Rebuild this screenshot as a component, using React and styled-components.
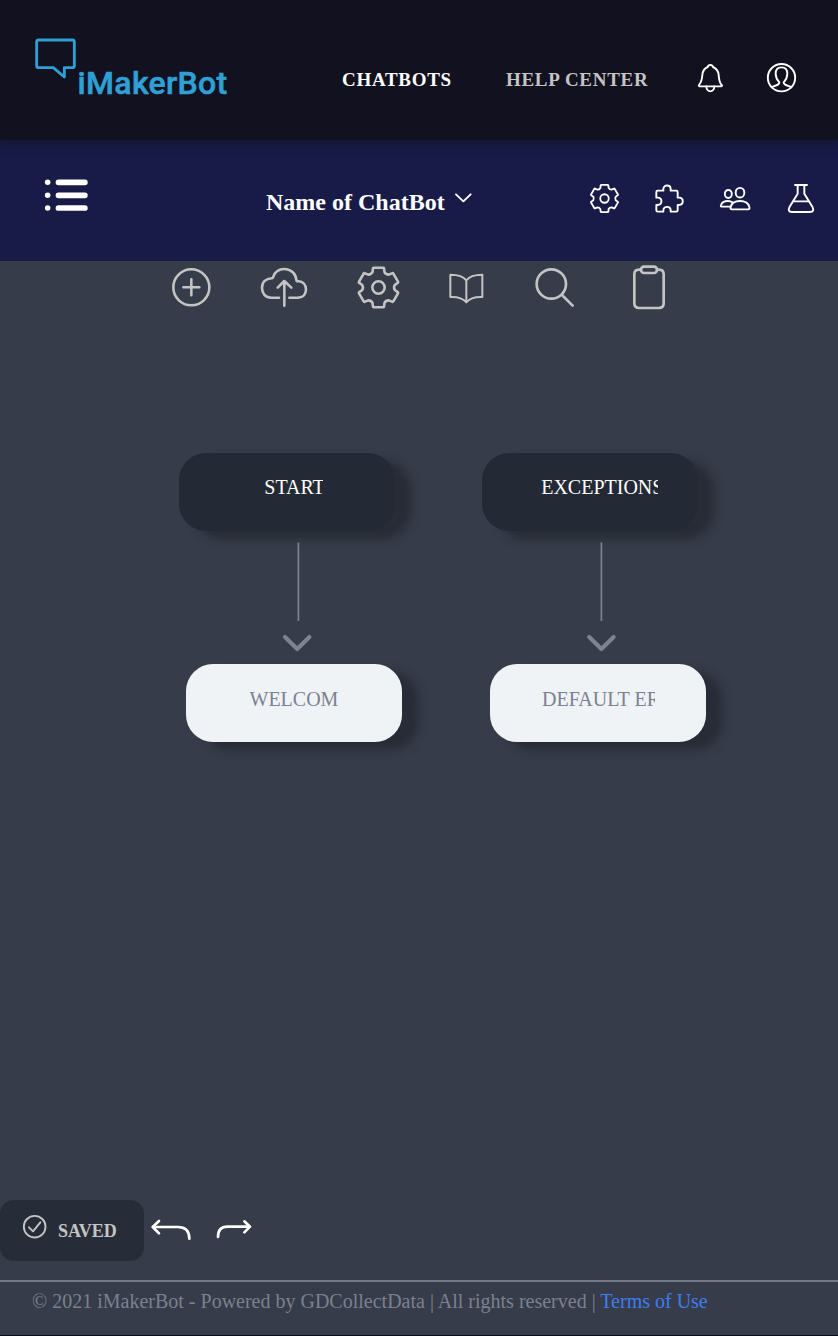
import React from "react";
import styled, { createGlobalStyle } from "styled-components";

const GlobalStyle = createGlobalStyle`
  * { box-sizing: border-box; }
  body {
    margin: 0;
    background: #12111f;
    font-family: "Liberation Serif", "Times New Roman", serif;
    font-size: 20px;
  }
`;

const Page = styled.div`
  display: flex;
  flex-direction: column;
  width: 838px;
  height: 1336px;
  overflow: hidden;
  border-bottom: 1px solid #0d0d18;
`;

const Header = styled.header`
  position: relative;
  display: flex;
  align-items: flex-start;
  height: 140px;
  flex: none;
  padding: 37px 0 0 34px;
  background: #12111f;
  box-shadow: 0 2px 10px rgba(15, 17, 30, 0.8);
`;

const Logo = styled.a`
  display: flex;
  align-items: flex-start;
  width: 308px;
  color: #2f9fd4;
`;

const LogoText = styled.span`
  margin: 27px 0 0 0.6px;
  font: 500 32px/38px Roboto, sans-serif;
  letter-spacing: 0.3px;
  -webkit-text-stroke: 0.6px #2f9fd4;
`;

const HeaderLink = styled.a`
  margin: 31px ${(p) => p.$gap}px 0 0;
  width: ${(p) => p.$width}px;
  line-height: 24px;
  font-size: 19px;
  letter-spacing: ${(p) => p.$spacing}px;
  font-weight: bold;
  white-space: nowrap;
  color: ${(p) => (p.$active ? "#ffffff" : "#c4c4c4")};
`;

const Icon = styled.svg`
  display: block;
  flex: none;
  fill: none;
  stroke: currentColor;
  stroke-width: ${(p) => p.$stroke || 5.7};
  stroke-linecap: round;
  stroke-linejoin: round;
  margin-top: ${(p) => p.$top || 0}px;
  margin-left: ${(p) => p.$left || 0}px;
`;

const HeaderIcons = styled.div`
  display: flex;
  color: #fff;
`;

const BotBar = styled.nav`
  display: flex;
  align-items: flex-start;
  height: 121px;
  flex: none;
  padding: 38px 0 0 44px;
  background: #181b48;
  color: #fff;
`;

const BotName = styled.h1`
  margin: 10px 0 0 177px;
  width: 188px;
  font-size: 24px;
  line-height: 28px;
  white-space: nowrap;
`;

const Workspace = styled.main`
  display: flex;
  flex-direction: column;
  flex: 1;
  background: #363c49;
`;

const Toolbar = styled.div`
  display: flex;
  align-items: flex-start;
  height: 60px;
  padding: 3px 0 0 170px;
  color: #c4c4c4;
`;

const Canvas = styled.section`
  position: relative;
  flex: 1;
`;

const Node = styled.div`
  position: absolute;
  left: ${(p) => p.$x}px;
  top: ${(p) => p.$y}px;
  width: 216px;
  height: 78.4px;
  padding: ${(p) => (p.$light ? 22 : 21)}px 0 0 ${(p) => p.$inset}px;
  border-radius: 27px;
  background: ${(p) => (p.$light ? "#eff3f6" : "#242a35")};
  color: ${(p) => (p.$light ? "#7b8191" : "#ffffff")};
  box-shadow: 16px 8px 10px #272c37;
`;

const NodeLabel = styled.div`
  width: ${(p) => p.$width}px;
  line-height: 26px;
  overflow: hidden;
  white-space: nowrap;
`;

const Connector = styled.svg`
  position: absolute;
  left: ${(p) => p.$x}px;
  top: 221px;
  width: 36px;
  height: 112px;
  fill: none;
  stroke: #7d8392;
`;

const Actions = styled.div`
  display: flex;
  height: 80px;
  align-items: flex-start;
  color: #fff;
`;

const Saved = styled.div`
  display: flex;
  align-items: flex-start;
  width: 144px;
  height: 61px;
  padding: 14px 0 0 22px;
  border-radius: 14px;
  background: #262c38;
  color: #c4c4c4;
  font-size: 18px;
  font-weight: bold;
`;

const SavedText = styled.span`
  margin: 7px 0 0 11px;
  line-height: 20px;
`;

const Footer = styled.footer`
  height: 55px;
  padding: 7px 0 0 32px;
  border-top: 2px solid #747a88;
  color: #7b8190;
  line-height: 24px;
  white-space: nowrap;
`;

const Terms = styled.a`
  color: #3f7cf0;
`;

const Glyph = ({ w, h, children, ...rest }) => (
  <Icon width={w} height={h} viewBox={`0 0 ${w * 3} ${h * 3}`} {...rest}>
    {children}
  </Icon>
);

const gearPath = (() => {
  const turn = (x, y, k) => {
    const a = (k * Math.PI) / 3;
    const px = x * Math.cos(a) - y * Math.sin(a) + 67.5;
    const py = x * Math.sin(a) + y * Math.cos(a) + 67.5;
    return `${px.toFixed(1)} ${py.toFixed(1)}`;
  };
  let d = `M${turn(-18, -46, 0)}`;
  for (let k = 0; k < 6; k++) {
    d += `L${turn(-16.5, -58, k)}Q${turn(-16, -59.5, k)} ${turn(-14, -59.5, k)}`;
    d += `L${turn(14, -59.5, k)}Q${turn(16, -59.5, k)} ${turn(16.5, -58, k)}`;
    d += `L${turn(18, -46, k)}Q${turn(22, -38.5, k)} ${turn(-18, -46, k + 1)}`;
  }
  return d + "Z";
})();

const Gear = ({ size, ...rest }) => (
  <Icon width={size} height={size} viewBox="0 0 135 135" $stroke={7.7} {...rest}>
    <path d={gearPath} />
    <circle cx="67.5" cy="67.5" r="18.5" />
  </Icon>
);

const chains = [
  { x: 179, inset: 85.3, label: "START", width: 58.7, connector: 280, nextX: 185.5, nextInset: 64, next: "WELCOME", nextWidth: 89 },
  { x: 481.7, inset: 59.5, label: "EXCEPTIONS", width: 116.8, connector: 582.5, nextX: 489.5, nextInset: 52.5, next: "DEFAULT ERROR", nextWidth: 113 },
];

export default function App() {
  return (
    <Page>
      <GlobalStyle />
      <Header>
        <Logo>
          <Glyph w={43} h={43} $stroke={8.5}>
            <path d="M14 9H115Q121 9 121 15V86Q121 92 115 92H91V120L58 92H14Q8 92 8 86V15Q8 9 14 9Z" />
          </Glyph>
          <LogoText>iMakerBot</LogoText>
        </Logo>
        <HeaderLink $active $width={110} $gap={54} $spacing={0.7}>CHATBOTS</HeaderLink>
        <HeaderLink $width={142} $gap={0} $spacing={0.7}>HELP CENTER</HeaderLink>
        <HeaderIcons>
          <Glyph w={27} h={31} $top={26} $left={49}>
            <path d="M40 6C35 6 33 8 32 12C20 17 17 24 16 36C15 52 11 60 6 66Q4 69 8 70H72Q77 69 74 66C68 60 66 52 65 36C64 24 60 17 48 12C47 8 45 6 40 6Z" />
            <path d="M28 70C28 79 34 85 40 85S52 79 52 70" />
          </Glyph>
          <Glyph w={31} h={31} $top={25} $left={42}>
            <circle cx="46.5" cy="47" r="41" />
            <path d="M17 76C28 68 40 72 40 61C32 52 29 44 29 35C29 22 36 16 46.500 16S64 22 64 35C64 44 61 52 53 61C53 72 65 68 76 76" />
          </Glyph>
        </HeaderIcons>
      </Header>

      <BotBar>
        <Glyph w={45} h={36}>
          <g fill="currentColor" stroke="none">
            {[13, 52, 90].map((y) => (
              <React.Fragment key={y}>
                <circle cx="11" cy={y} r="8.300" />
                <rect x="35" y={y - 8.5} width="96" height="17" rx="8" />
              </React.Fragment>
            ))}
          </g>
        </Glyph>
        <BotName>Name of ChatBot</BotName>
        <Glyph w={19} h={12} $top={13.5}>
          <path d="M6 7L28 28L50 7" />
        </Glyph>
        <Gear size={31} $top={4.5} $left={116.3} $stroke={8} />
        <Glyph w={31} h={31} $top={4.5} $left={34}>
          <path d="M7 27Q7 23 11 23H28V18C28 4 50 4 50 18V23H67Q71 23 71 27V44H75C90 44 90 66 75 66H71V82Q71 86 67 86H50V82C50 68 28 68 28 82V86H11Q7 86 7 82V66H11C26 66 26 44 11 44H7Z" />
        </Glyph>
        <Glyph w={32} h={25} $top={8} $left={34}>
          <ellipse cx="63" cy="20" rx="13" ry="14.500" />
          <path d="M39 70H87Q93 70 91 63C88 50 77 45 63 45S38 50 35 63Q33 70 39 70Z" />
          <ellipse cx="28" cy="24" rx="10.500" ry="12" />
          <path d="M32 62H9Q4 62 6 57C9 48 17 45 27 45C33 45 36 46 40 49" />
        </Glyph>
        <Glyph w={28} h={31} $top={4.5} $left={35.7}>
          <path d="M24 6H60M32 6V32L8 71Q0 87 15 87H69Q84 87 76 71L52 32V6M18 55H66" />
        </Glyph>
      </BotBar>

      <Workspace>
        <Toolbar>
          <Glyph w={42} h={42} $stroke={7.7} $top={2}>
            <circle cx="64" cy="64" r="54" />
            <path d="M40 64H88M64 40V88" />
          </Glyph>
          <Glyph w={50} h={42} $stroke={7.7} $top={2} $left={48}>
            <path d="M57 95H34C16 95 6 82 6 66C6 48 18 38 35 37Q39 37 40 32C45 17 57 9 73 9C93 9 108 24 109 41Q109 46 115 46C130 47 138 57 138 70C138 85 129 95 114 95H88M73 46V119M53 65L73 45L94 65" />
          </Glyph>
          <Gear size={45} $top={1} $left={46} />
          <Glyph w={36} h={33} $top={8} $left={47} $stroke={6}>
            <path d="M7 8V75C27 74 44 78 55 91C66 78 83 74 103 75V8C84 8 65 11 55 25C45 11 26 8 7 8M55 25V91" />
          </Glyph>
          <Glyph w={42} h={42} $stroke={8} $top={2} $left={50}>
            <circle cx="52" cy="54" r="44" />
            <path d="M84 87L116 119" />
          </Glyph>
          <Glyph w={34} h={46} $stroke={8} $left={56}>
            <path d="M27 17H21Q7 17 7 31V118Q7 132 21 132H81Q95 132 95 118V31Q95 17 81 17H75" />
            <rect x="27" y="8" width="48" height="19" rx="9" />
          </Glyph>
        </Toolbar>

        <Canvas>
          {chains.map((c) => (
            <React.Fragment key={c.label}>
              <Node $x={c.x} $y={132} $inset={c.inset}>
                <NodeLabel $width={c.width}>{c.label}</NodeLabel>
              </Node>
              <Connector $x={c.connector}>
                <path d="M18.400 0.500V79" strokeWidth="1.700" />
                <path
                  d={c.connector === 280 ? "M5 95L17.200 107L29.400 95" : "M6.200 95L18.400 107L30.600 95"}
                  strokeWidth="4.200"
                  strokeLinecap="round"
                  strokeLinejoin="round"
                />
              </Connector>
              <Node $light $x={c.nextX} $y={343} $inset={c.nextInset}>
                <NodeLabel $width={c.nextWidth}>{c.next}</NodeLabel>
              </Node>
            </React.Fragment>
          ))}
        </Canvas>

        <Actions>
          <Saved>
            <Glyph w={25} h={25}>
              <circle cx="38" cy="38" r="32.500" />
              <path d="M21 40L33 52L55 25" />
            </Glyph>
            <SavedText>SAVED</SavedText>
          </Saved>
          <Glyph w={42} h={24} $stroke={8} $top={18} $left={6}>
            <path d="M27 9L8 27L27 46M8 27H83C106 27 118 38 118 62" />
          </Glyph>
          <Glyph w={38} h={22} $stroke={8} $top={18} $left={23}>
            <path d="M88 10L105 26L88 43M105 26H37C18 26 9 36 9 57" />
          </Glyph>
        </Actions>
        <Footer>
          © 2021 iMakerBot - Powered by GDCollectData | All rights reserved | <Terms>Terms of Use</Terms>
        </Footer>
      </Workspace>
    </Page>
  );
}
